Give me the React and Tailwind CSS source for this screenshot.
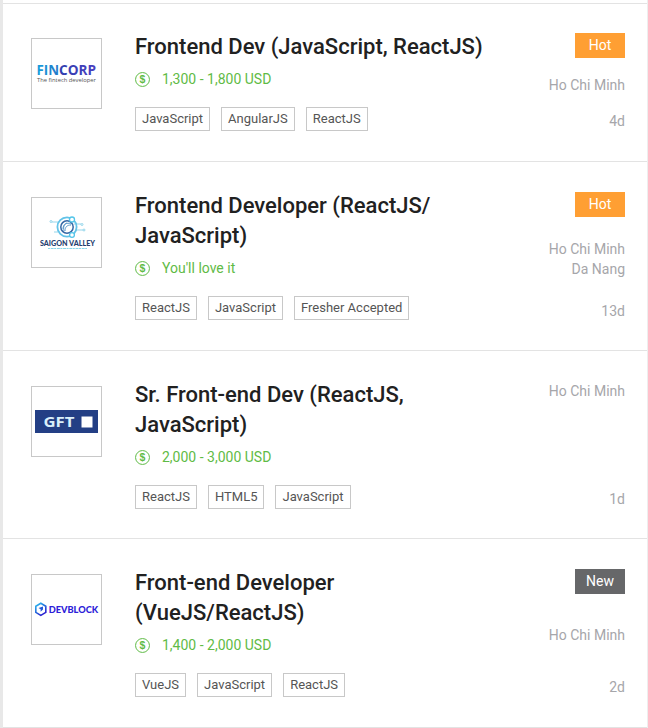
const FincorpLogo = () => (
  <svg viewBox="0 0 69 69" className="size-[69px]">
    <defs>
      <linearGradient id="fin" x1="0" x2="1">
        <stop offset="0" stopColor="#149fdb" />
        <stop offset="1" stopColor="#2478c8" />
      </linearGradient>
      <linearGradient id="corp" x1="0" x2="1">
        <stop offset="0" stopColor="#2f3fae" />
        <stop offset="1" stopColor="#4a3fc0" />
      </linearGradient>
    </defs>
    <text x="4.5" y="36" textLength="22.5" lengthAdjust="spacingAndGlyphs" fontFamily="Open Sans, sans-serif" fontWeight="700" fontSize="15" fill="url(#fin)">FIN</text>
    <text x="27" y="36" textLength="37" lengthAdjust="spacingAndGlyphs" fontFamily="Open Sans, sans-serif" fontWeight="700" fontSize="15" fill="url(#corp)">CORP</text>
    <text x="5" y="43" textLength="59" lengthAdjust="spacingAndGlyphs" fontFamily="Open Sans, sans-serif" fontSize="6" fill="#555">The fintech developer</text>
  </svg>
);

const SaigonValleyLogo = () => (
  <svg viewBox="0 0 69 69" className="size-[69px]" fill="none">
    <g stroke="#7ccbe6" strokeWidth="0.8">
      <path d="M20 24h7M22 34h4M42 26h7M43 32h8" />
      <circle cx="19" cy="23.5" r="1" />
      <circle cx="50" cy="26.5" r="1" />
      <circle cx="52" cy="32" r="1" />
    </g>
    <circle cx="35" cy="29" r="9.6" stroke="#63c3e8" strokeWidth="1.8" />
    <circle cx="35" cy="29" r="6.2" stroke="#3568a5" strokeWidth="1.5" />
    <path d="M31 31c0-5 4-7 8-5M33 33c0-4 2-6 6-6M35 25c-3 1-4 4-3 8" stroke="#5c9aca" strokeWidth="1" />
    <circle cx="40" cy="21.5" r="2.5" fill="#fff" stroke="#53c5e9" strokeWidth="1.3" />
    <circle cx="40" cy="37" r="2.4" fill="#fff" stroke="#53c5e9" strokeWidth="1.3" />
    <text x="8" y="48" textLength="55" lengthAdjust="spacingAndGlyphs" fontFamily="Lato, sans-serif" fontWeight="900" fontSize="7" fill="#26406f">SAIGON VALLEY</text>
    <path d="M16 50.5h39" stroke="#8bd6ea" strokeWidth="1" strokeDasharray="2 .7 3 .5" />
  </svg>
);

const GftLogo = () => (
  <svg viewBox="0 0 69 69" className="size-[69px]">
    <path d="M3 23h63v23H3z" fill="#233f85" />
    <text x="11.5" y="39.8" textLength="31" lengthAdjust="spacingAndGlyphs" fontFamily="Open Sans, sans-serif" fontWeight="700" fontSize="15" fill="#d9effa">GFT</text>
    <path d="M49.5 29.5h11v11h-11z" fill="#fff" />
  </svg>
);

const DevblockLogo = () => (
  <svg viewBox="0 0 69 69" className="size-[69px]" fill="none">
    <defs>
      <linearGradient id="hex" x1="0" y1="0" x2="0.6" y2="1">
        <stop offset="0" stopColor="#2fc4f2" />
        <stop offset="0.55" stopColor="#246bdc" />
        <stop offset="1" stopColor="#2b1fd0" />
      </linearGradient>
    </defs>
    <path d="M8.8 28.2l5 3v6.2l-5 3-5-3v-6.2z" stroke="url(#hex)" strokeWidth="1.6" />
    <path d="M6.5 33l4.5-1.6v3.2l-2.4 2.2v-2.5z" fill="#2359d8" />
    <text x="16.7" y="37.8" textLength="49.5" lengthAdjust="spacingAndGlyphs" fontFamily="Lato, sans-serif" fontWeight="900" fontSize="9.5" fill="#2c20d8">DEVBLOCK</text>
  </svg>
);

const SalaryIcon = () => (
  <svg viewBox="0 0 15 15" className="size-[15px] shrink-0">
    <circle cx="7.5" cy="7.5" r="6.95" fill="none" stroke="#5fbb46" strokeWidth="1" />
    <text x="7.5" y="11.3" textAnchor="middle" fontFamily="Liberation Sans, sans-serif" fontWeight="700" fontSize="10.5" fill="#5fbb46">$</text>
  </svg>
);

const jobs = [
  {
    Logo: FincorpLogo,
    title: ["Frontend Dev (JavaScript, ReactJS)"],
    salary: "1,300 - 1,800 USD",
    tags: ["JavaScript", "AngularJS", "ReactJS"],
    badge: "Hot",
    cities: ["Ho Chi Minh"],
    age: "4d",
    row: "h-[158px] pt-[29px]",
    side: "pt-0",
    cityGap: "mt-[17px]",
    ageGap: "mt-[16px]",
  },
  {
    Logo: SaigonValleyLogo,
    title: ["Frontend Developer (ReactJS/", "JavaScript)"],
    salary: "You'll love it",
    tags: ["ReactJS", "JavaScript", "Fresher Accepted"],
    badge: "Hot",
    cities: ["Ho Chi Minh", "Da Nang"],
    age: "13d",
    row: "h-[189px] pt-[30px]",
    cityGap: "mt-[22px]",
    ageGap: "mt-[22px]",
  },
  {
    Logo: GftLogo,
    title: ["Sr. Front-end Dev (ReactJS,", "JavaScript)"],
    salary: "2,000 - 3,000 USD",
    tags: ["ReactJS", "HTML5", "JavaScript"],
    cities: ["Ho Chi Minh"],
    age: "1d",
    row: "h-[188px] pt-[30px]",
    cityGap: "mt-0",
    ageGap: "mt-[88px]",
  },
  {
    Logo: DevblockLogo,
    title: ["Front-end Developer", "(VueJS/ReactJS)"],
    salary: "1,400 - 2,000 USD",
    tags: ["VueJS", "JavaScript", "ReactJS"],
    badge: "New",
    cities: ["Ho Chi Minh"],
    age: "2d",
    row: "h-[189px] pt-[30px]",
    cityGap: "mt-[31px]",
    ageGap: "mt-[32px]",
  },
];

function JobRow({ job }) {
  const { Logo } = job;
  return (
    <article className={`flex border-b border-[#e3e3e3] pr-[22px] pl-7 ${job.row}`}>
      <div className="mt-[5px] size-[71px] shrink-0 border border-[#c8c8c8]">
        <Logo />
      </div>
      <div className="ml-[33px] flex-1">
        <h2 className="-mt-px text-[22px] leading-[30px] font-medium whitespace-nowrap text-[#212121]">
          {job.title.map((line) => (
            <span key={line} className="block">{line}</span>
          ))}
        </h2>
        <div className="mt-[7px] flex h-5 items-center gap-3 text-sm text-[#5fbb46]">
          <SalaryIcon />
          <span>{job.salary}</span>
        </div>
        <ul className="mt-[18px] flex gap-[11px]">
          {job.tags.map((tag) => (
            <li key={tag} className="h-6 border border-[#c8c8c8] px-[6px] text-[13px] leading-[22px] whitespace-nowrap text-[#555]">
              {tag}
            </li>
          ))}
        </ul>
      </div>
      <div className="flex shrink-0 flex-col items-end text-sm leading-5 text-[#a6a6aa]">
        {job.badge && (
          <span className={`h-[25px] w-[50px] text-center text-sm leading-[25px] text-white ${job.badge === "Hot" ? "bg-[#ff9f33]" : "bg-[#666769]"}`}>
            {job.badge}
          </span>
        )}
        <div className={`text-right ${job.cityGap}`}>
          {job.cities.map((city) => (
            <p key={city}>{city}</p>
          ))}
        </div>
        <p className={job.ageGap}>{job.age}</p>
      </div>
    </article>
  );
}

export default function App() {
  return (
    <main className="h-[728px] w-[648px] overflow-hidden border-r border-l-3 border-r-[#eeeeee] border-l-[#e8e8e8] bg-white pt-[3px] font-['Roboto',sans-serif]">
      <div className="border-t border-[#e3e3e3]">
        {jobs.map((job) => (
          <JobRow key={job.title[0]} job={job} />
        ))}
      </div>
    </main>
  );
}
